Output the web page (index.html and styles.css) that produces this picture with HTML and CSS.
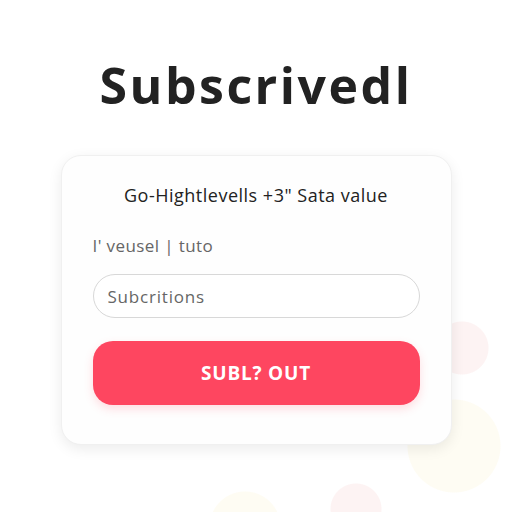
FILE: index.html
```html
<!DOCTYPE html>
<html lang="en">
<head>
    <meta charset="UTF-8">
    <meta name="viewport" content="width=device-width, initial-scale=1.0">
    <title>Subscrivedl</title>
    <link rel="stylesheet" href="styles.css">
</head>
<body>
    <div class="page">
        <h1 class="title">Subscrivedl</h1>

        <div class="card">
            <p class="subtitle">Go-Hightlevells +3" Sata value</p>
            <label class="label" for="subInput">I' veusel | tuto</label>
            <input type="text" id="subInput" class="input" placeholder="Subcritions">
            <button class="button">SUBL? OUT</button>
        </div>
    </div>
</body>
</html>
```

FILE: styles.css
```css
body {
    font-family: "Open Sans", sans-serif;
    color: #222;
    margin: 0;
    padding: 0;
    height: 512px;
    overflow: hidden;
    /* círculos decorativos del fondo */
    background-color: #ffffff;
    background-image:
        radial-gradient(circle at 462px 348px, #fdf3f3 26px, transparent 27px),
        radial-gradient(circle at 454px 446px, #fefcf3 46px, transparent 47px),
        radial-gradient(circle at 356px 509px, #fdf3f3 25px, transparent 26px),
        radial-gradient(circle at 245px 527px, #fefcf3 35px, transparent 36px);
    background-repeat: no-repeat;
}

.page {
    display: flex;
    flex-direction: column;
    align-items: center;
    padding-top: 55px;
}

.title {
    font-size: 50px;
    font-weight: 700;
    color: #222;
    margin: 0 0 40px 0;
    line-height: 60px;
    letter-spacing: 2.5px;
}

.card {
    width: 391px;
    box-sizing: border-box;
    background-color: #fefefe;
    border: 1px solid #f0f0f0;
    border-radius: 20px;
    box-shadow: 0 4px 14px rgba(0, 0, 0, 0.08);
    padding: 27px 31px 39px 31px;
    display: flex;
    flex-direction: column;
}

.subtitle {
    text-align: center;
    font-size: 18px;
    letter-spacing: 0.5px;
    margin: 0 0 27px 0;
    color: #222;
}

.label {
    font-size: 17px;
    letter-spacing: 0.4px;
    color: #666;
    margin-bottom: 17px;
}

.input {
    height: 44px;
    box-sizing: border-box;
    border: 1px solid #d8d8d8;
    border-radius: 22px;
    padding: 0 14px;
    font-family: "Open Sans", sans-serif;
    font-size: 17px;
    letter-spacing: 0.8px;
    color: #555;
    background: #fff;
    margin-bottom: 23px;
}

.input::placeholder {
    color: #666;
}

.button {
    height: 64px;
    border: none;
    border-radius: 20px;
    background-color: #fe4660;
    color: #fff;
    font-family: "Open Sans", sans-serif;
    font-weight: 700;
    font-size: 19px;
    letter-spacing: 0.8px;
    box-shadow: 0 4px 10px rgba(254, 70, 96, 0.18);
    cursor: pointer;
}
```
